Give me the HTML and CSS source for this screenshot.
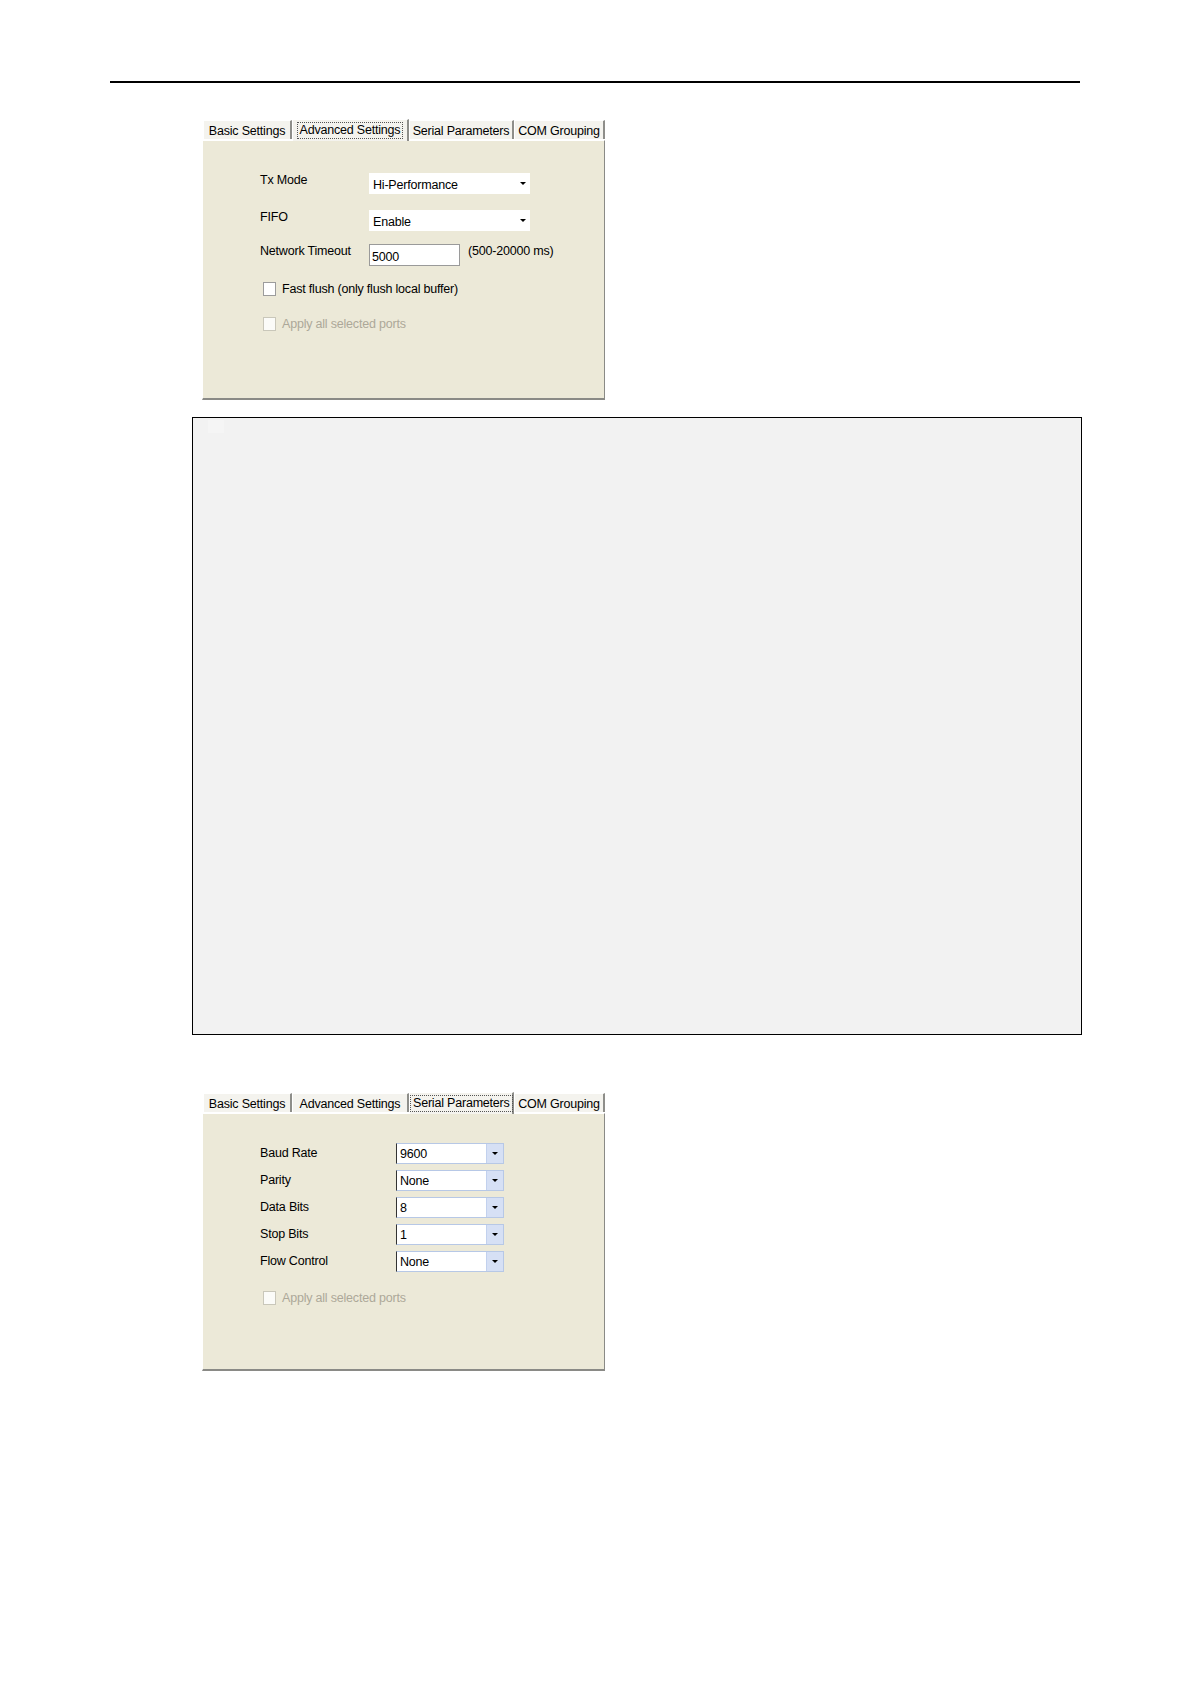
FILE: index.html
```html
<!DOCTYPE html>
<html>
<head>
<meta charset="utf-8">
<link rel="stylesheet" href="styles.css">
</head>
<body>
<div class="page">
  <div class="rule"></div>

  <div class="dialog dialog-adv">
    <div class="tabs">
      <div class="tab t-basic">Basic Settings</div>
      <div class="tab t-adv sel"><span class="focus">Advanced Settings</span></div>
      <div class="tab t-serial">Serial Parameters</div>
      <div class="tab t-com">COM Grouping</div>
    </div>
    <div class="panel panel-adv">
      <div class="row r1">
        <div class="lbl lbl-adv">Tx Mode</div>
        <div class="flat-combo"><span class="val">Hi-Performance</span><span class="arrow"></span></div>
      </div>
      <div class="row r2">
        <div class="lbl lbl-adv">FIFO</div>
        <div class="flat-combo"><span class="val">Enable</span><span class="arrow"></span></div>
      </div>
      <div class="row r3">
        <div class="lbl lbl-adv">Network Timeout</div>
        <div class="edit">5000</div>
        <div class="hint">(500-20000 ms)</div>
      </div>
      <div class="check c1"><span class="box"></span><span class="ctext">Fast flush (only flush local buffer)</span></div>
      <div class="check c2 disabled"><span class="box"></span><span class="ctext">Apply all selected ports</span></div>
    </div>
  </div>

  <div class="bigbox"><div class="ghost"></div></div>

  <div class="dialog dialog-serial">
    <div class="tabs">
      <div class="tab t-basic">Basic Settings</div>
      <div class="tab t-adv">Advanced Settings</div>
      <div class="tab t-serial sel"><span class="focus">Serial Parameters</span></div>
      <div class="tab t-com">COM Grouping</div>
    </div>
    <div class="panel panel-serial">
      <div class="srow first">
        <div class="lbl lbl-ser">Baud Rate</div>
        <div class="xp-combo"><span class="val">9600</span><span class="btn"><span class="arrow"></span></span></div>
      </div>
      <div class="srow">
        <div class="lbl lbl-ser">Parity</div>
        <div class="xp-combo"><span class="val">None</span><span class="btn"><span class="arrow"></span></span></div>
      </div>
      <div class="srow">
        <div class="lbl lbl-ser">Data Bits</div>
        <div class="xp-combo"><span class="val">8</span><span class="btn"><span class="arrow"></span></span></div>
      </div>
      <div class="srow">
        <div class="lbl lbl-ser">Stop Bits</div>
        <div class="xp-combo"><span class="val">1</span><span class="btn"><span class="arrow"></span></span></div>
      </div>
      <div class="srow">
        <div class="lbl lbl-ser">Flow Control</div>
        <div class="xp-combo"><span class="val">None</span><span class="btn"><span class="arrow"></span></span></div>
      </div>
      <div class="check c3 disabled"><span class="box"></span><span class="ctext">Apply all selected ports</span></div>
    </div>
  </div>
</div>
</body>
</html>
```

FILE: styles.css
```css
html, body {
  margin: 0;
  padding: 0;
  background: #ffffff;
}

.page {
  padding-top: 81px;
  font-family: "Liberation Sans", Arial, sans-serif;
  font-size: 12.5px;
  letter-spacing: -0.2px;
  color: #000;
}

.rule {
  margin-left: 110px;
  width: 970px;
  height: 1.5px;
  background: #000;
}

/* ---------- dialog ---------- */
.dialog {
  margin-left: 202px;
  width: 403px;
}
.dialog-adv { margin-top: 36px; }
.dialog-serial { margin-top: 57px; }

.tabs {
  display: flex;
  align-items: flex-end;
  height: 21px;
  padding-left: 1px;
}

.tab {
  box-sizing: border-box;
  height: 19px;
  line-height: 20px;
  text-align: center;
  white-space: nowrap;
  background: #f4f3ee;
  border-top: 1px solid #ffffff;
  border-left: 1px solid #ffffff;
  border-right: 2px solid #8e8e8a;
  margin-bottom: 1px;
}
.t-basic { width: 89px; }
.t-adv { width: 117px; }
.t-serial { width: 105px; }
.t-com { width: 91px; }

.tab.sel {
  position: relative;
  z-index: 2;
  height: 22px;
  margin-bottom: -1px;
  line-height: 18px;
  background: #f4f3ee;
  padding-top: 1px;
}
.tab.sel .focus {
  display: inline-block;
  border: 1px dotted #555;
  line-height: 15px;
  padding: 0 2px;
}

.panel {
  box-sizing: border-box;
  background: #ece9d8;
  border-top: 1px solid #ffffff;
  border-left: 1px solid #ffffff;
  border-right: 1px solid #8a8a86;
  border-bottom: 2px solid #8a8a86;
  padding-left: 57px;
}
.panel-adv {
  height: 260px;
  padding-top: 32px;
}
.panel-serial {
  height: 258px;
  padding-top: 29px;
}

/* ---------- advanced settings rows ---------- */
.row {
  display: flex;
  align-items: flex-start;
  height: 21px;
}
.r2 { margin-top: 16px; }
.r3 { margin-top: 13px; height: 22px; }

.lbl {
  line-height: 16px;
  margin-top: -1px;
  white-space: nowrap;
}
.lbl-adv { width: 109px; }
.lbl-ser { width: 136px; margin-top: 2px; }

.flat-combo {
  box-sizing: border-box;
  width: 161px;
  height: 21px;
  background: #ffffff;
  display: flex;
  align-items: center;
  justify-content: space-between;
  padding: 0 4px 0 4px;
}
.val {
  line-height: 16px;
  padding-top: 3px;
}

.arrow {
  width: 0;
  height: 0;
  border-left: 3px solid transparent;
  border-right: 3px solid transparent;
  border-top: 3px solid #000;
}

.edit {
  box-sizing: border-box;
  width: 91px;
  height: 22px;
  background: #fff;
  border: 1px solid #9a9a9a;
  padding: 4px 0 0 2px;
  line-height: 16px;
}
.hint {
  margin-left: 8px;
  line-height: 16px;
  margin-top: -1px;
}

.check {
  display: flex;
  align-items: center;
  height: 14px;
  margin-left: 3px;
}
.c1 { margin-top: 16px; }
.c2 { margin-top: 21px; }
.c3 { margin-top: 19px; }

.box {
  box-sizing: border-box;
  width: 13px;
  height: 14px;
  border: 1px solid #9c9c9c;
  background: #ffffff;
}
.ctext {
  margin-left: 6px;
  line-height: 16px;
}
.check.disabled .box {
  border-color: #c9c7ba;
  background: #fbfbf8;
}
.check.disabled .ctext {
  color: #aca899;
}

/* ---------- serial parameter rows ---------- */
.srow {
  display: flex;
  align-items: flex-start;
  height: 21px;
  margin-top: 6px;
}
.srow.first { margin-top: 0; }

.xp-combo {
  box-sizing: border-box;
  width: 108px;
  height: 21px;
  background: #fff;
  border: 1px solid #b7c8e6;
  border-left: 1px solid #333;
  display: flex;
  align-items: stretch;
  justify-content: space-between;
  padding-left: 3px;
}
.xp-combo .val {
  padding-top: 2px;
}
.xp-combo .btn {
  width: 16px;
  background: #d6e0f5;
  border-left: 1px solid #c2d1ee;
  display: flex;
  align-items: center;
  justify-content: center;
}

/* ---------- big empty box ---------- */
.bigbox {
  box-sizing: border-box;
  margin-top: 17px;
  margin-left: 192px;
  width: 890px;
  height: 618px;
  border: 1px solid #000;
  background: #f2f2f2;
  padding: 2px 0 0 15px;
}
.ghost {
  width: 16px;
  height: 13px;
  background: #f5f5f5;
}
```
